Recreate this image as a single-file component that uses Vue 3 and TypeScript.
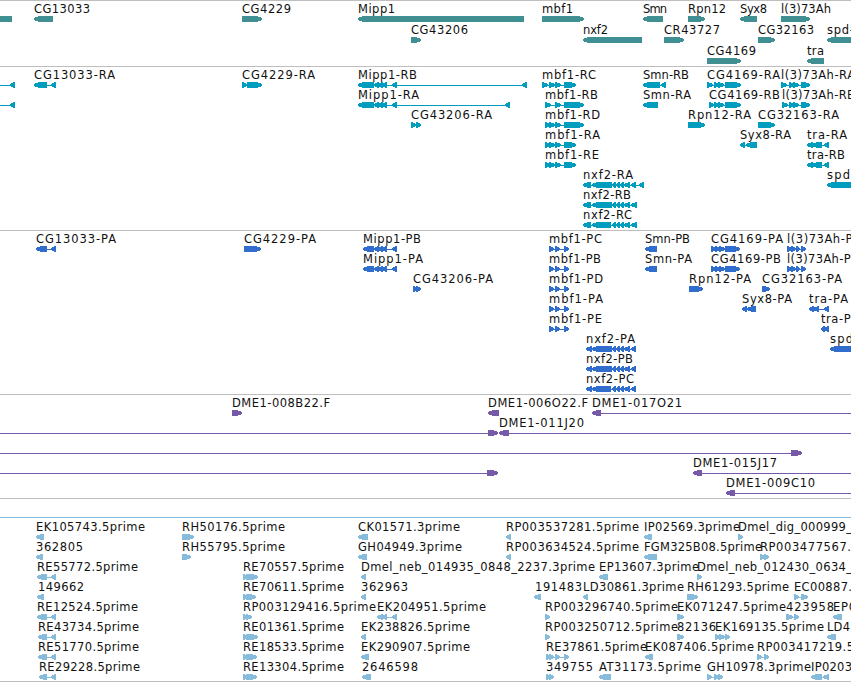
<script lang="ts" setup>
type Direction = "L" | "R" | "";

// row, label, label start, label end, direction, exons ("start-end", space separated)
type Feature = [number, string, number, number, Direction, string];

interface Track {
  name: string;
  height: number;
  top: number;
  pitch: number;
  features: Feature[];
}

const WIDTH = 851;
const HEAD = 5;

const tracks: Track[] = [
  {
    name: "gene",
    height: 65,
    top: 15,
    pitch: 21,
    features: [
      [0, "", 0, 0, "", "0-12"],
      [0, "CG13033", 34, 90, "L", "34-53"],
      [0, "CG4229", 242, 291, "R", "242-262"],
      [0, "Mipp1", 358, 395, "L", "358-524"],
      [0, "mbf1", 542, 573, "R", "542-584"],
      [0, "Smn", 643, 667, "L", "643-663"],
      [0, "Rpn12", 688, 726, "R", "688-705"],
      [0, "Syx8", 740, 767, "L", "740-757"],
      [0, "l(3)73Ah", 781, 831, "R", "781-810"],
      [1, "CG43206", 411, 468, "R", "411-421"],
      [1, "nxf2", 583, 608, "L", "583-642"],
      [1, "CR43727", 664, 720, "R", "664-684"],
      [1, "CG32163", 758, 814, "R", "758-775"],
      [1, "spd-2", 827, 862, "L", "827-880"],
      [2, "CG4169", 707, 756, "R", "707-741"],
      [2, "tra", 807, 824, "L", "807-824"],
    ],
  },
  {
    name: "transcript",
    height: 163,
    top: 15,
    pitch: 20,
    features: [
      [0, "", 0, 0, "L", "-20--10 10-15"],
      [1, "", 0, 0, "L", "-20--10 10-15"],
      [0, "CG13033-RA", 34, 115, "L", "34-47 51-56"],
      [0, "CG4229-RA", 242, 315, "R", "242-247 247-262"],
      [0, "Mipp1-RB", 358, 417, "L", "358-374 374-379 378-383 382-387 392-397 522-527"],
      [1, "Mipp1-RA", 358, 419, "L", "358-374 374-379 378-383 382-387 392-397 505-510"],
      [2, "CG43206-RA", 411, 492, "R", "411-416 416-421"],
      [0, "mbf1-RC", 542, 596, "R", "542-548 549-555 555-561 564-576"],
      [1, "mbf1-RB", 545, 598, "R", "545-551 555-561 564-584"],
      [2, "mbf1-RD", 545, 600, "R", "545-550 549-555 555-561 564-584"],
      [3, "mbf1-RA", 545, 600, "R", "545-550 549-555 555-561 564-576"],
      [4, "mbf1-RE", 545, 599, "R", "545-550 549-555 555-561 564-576"],
      [5, "nxf2-RA", 583, 633, "L", "583-591 592-612 612-616 616-620 620-624 624-630 631-636 639-644"],
      [6, "nxf2-RB", 583, 631, "L", "583-591 592-612 612-616 616-620 620-624 624-630 631-637"],
      [7, "nxf2-RC", 583, 632, "L", "583-591 592-611 612-616 616-620 620-624 624-630 631-637"],
      [0, "Smn-RB", 643, 689, "L", "643-660 661-666"],
      [1, "Smn-RA", 643, 691, "L", "643-658"],
      [2, "Rpn12-RA", 688, 751, "R", "688-705"],
      [3, "Syx8-RA", 740, 791, "L", "740-745 746-757"],
      [0, "CG4169-RA", 707, 780, "R", "707-713 714-719 718-724 725-741"],
      [1, "CG4169-RB", 709, 780, "R", "709-714 714-719 718-724 725-741"],
      [0, "l(3)73Ah-RA", 781, 855, "R", "781-787 789-794 793-799 801-810"],
      [1, "l(3)73Ah-RB", 782, 855, "R", "782-788 789-794 793-799 801-810"],
      [2, "CG32163-RA", 758, 839, "R", "758-775"],
      [3, "tra-RA", 807, 847, "L", "807-813 812-822 824-829"],
      [4, "tra-RB", 807, 845, "L", "807-813 812-822 824-829"],
      [5, "spd-2-RA", 827, 887, "L", "827-880"],
    ],
  },
  {
    name: "protein",
    height: 163,
    top: 15,
    pitch: 20,
    features: [
      [0, "CG13033-PA", 36, 116, "L", "36-47 51-56"],
      [0, "CG4229-PA", 244, 316, "R", "244-247 246-261"],
      [0, "Mipp1-PB", 363, 421, "L", "363-374 374-379 378-383 382-387 392-397"],
      [1, "Mipp1-PA", 363, 423, "L", "363-374 374-379 378-383 382-387 392-397"],
      [2, "CG43206-PA", 413, 493, "R", "413-417 416-421"],
      [0, "mbf1-PC", 549, 602, "R", "549-554 555-560 564-569"],
      [1, "mbf1-PB", 549, 601, "R", "549-554 555-560 564-569"],
      [2, "mbf1-PD", 549, 603, "R", "549-554 555-560 564-569"],
      [3, "mbf1-PA", 549, 603, "R", "549-554 555-560 564-569"],
      [4, "mbf1-PE", 549, 602, "R", "549-554 555-560 564-569"],
      [5, "nxf2-PA", 586, 635, "L", "586-592 592-612 612-616 616-620 620-624 624-630 631-636"],
      [6, "nxf2-PB", 586, 633, "L", "586-592 592-612 612-616 616-620 620-624 624-630 631-636"],
      [7, "nxf2-PC", 586, 634, "L", "586-592 592-611 612-616 616-620 620-624 624-630 631-636"],
      [0, "Smn-PB", 645, 690, "L", "645-657"],
      [1, "Smn-PA", 645, 692, "L", "645-657"],
      [2, "Rpn12-PA", 689, 751, "R", "689-703"],
      [3, "Syx8-PA", 742, 792, "L", "742-747 747-756"],
      [0, "CG4169-PA", 711, 783, "R", "711-716 715-720 719-725 725-740"],
      [1, "CG4169-PB", 711, 781, "R", "711-716 715-720 719-725 725-740"],
      [0, "l(3)73Ah-PA", 787, 860, "R", "787-792 791-796 796-800 801-806"],
      [1, "l(3)73Ah-PB", 787, 859, "R", "787-792 791-796 796-800 801-806"],
      [2, "CG32163-PA", 762, 842, "R", "762-770"],
      [3, "tra-PA", 809, 848, "L", "809-814 813-819 824-829"],
      [4, "tra-PB", 821, 859, "L", "821-825 824-829"],
      [5, "spd-2-PA", 830, 889, "L", "830-880"],
    ],
  },
  {
    name: "clone",
    height: 103,
    top: 15,
    pitch: 20,
    features: [
      [0, "DME1-008B22.F", 232, 330, "R", "232-242"],
      [0, "DME1-006O22.F", 488, 588, "L", "488-499"],
      [0, "DME1-017O21", 592, 682, "L", "592-601 900-910"],
      [1, "", 0, 0, "R", "-20--10 488-498"],
      [1, "DME1-011J20", 499, 584, "L", "499-509 900-910"],
      [2, "", 0, 0, "R", "-20--10 791-802"],
      [3, "", 0, 0, "R", "-20--10 487-498"],
      [3, "DME1-015J17", 693, 777, "L", "693-702 900-910"],
      [4, "DME1-009C10", 726, 815, "L", "726-735 900-910"],
    ],
  },
  { name: "spacer", height: 18, top: 15, pitch: 20, features: [] },
  {
    name: "est",
    height: 163,
    top: 16,
    pitch: 20,
    features: [
      [0, "EK105743.5prime", 36, 145, "L", "36-44"],
      [0, "RH50176.5prime", 182, 285, "R", "182-194"],
      [0, "CK01571.3prime", 358, 460, "L", "358-368"],
      [0, "RP003537281.5prime", 506, 639, "L", "506-511"],
      [0, "IP02569.3prime", 644, 740, "L", "644-652"],
      [0, "Dmel_dig_000999_", 738, 852, "R", "738-743"],
      [1, "362805", 36, 83, "L", "36-43"],
      [1, "RH55795.5prime", 182, 285, "R", "182-191"],
      [1, "GH04949.3prime", 358, 462, "L", "358-367"],
      [1, "RP003634524.5prime", 506, 639, "L", "506-511"],
      [1, "FGM325B08.5prime", 644, 762, "L", "644-657"],
      [1, "RP003477567.", 760, 851, "R", "760-765 764-769"],
      [2, "RE55772.5prime", 37, 138, "L", "37-47 51-56"],
      [2, "RE70557.5prime", 243, 344, "R", "243-247 246-258"],
      [2, "Dmel_neb_014935_0848_2237.3prime", 361, 595, "L", "361-366"],
      [2, "EP13607.3prime", 599, 699, "L", "599-608"],
      [2, "Dmel_neb_012430_0634_", 697, 852, "R", "697-702"],
      [3, "149662", 38, 84, "L", "37-44"],
      [3, "RE70611.5prime", 243, 344, "R", "243-247 246-256"],
      [3, "362963", 361, 408, "L", "361-366"],
      [3, "191483", 535, 582, "L", "534-541"],
      [3, "LD30861.3prime", 583, 684, "L", "583-588"],
      [3, "RH61293.5prime", 687, 789, "R", "687-698"],
      [3, "EC00887.", 794, 852, "R", "794-799 801-808"],
      [4, "RE12524.5prime", 37, 138, "L", "37-47 51-56"],
      [4, "RP003129416.5prime", 243, 376, "R", "243-247 246-252"],
      [4, "EK204951.5prime", 377, 486, "L", "377-383 382-387 392-397"],
      [4, "RP003296740.5prime", 545, 678, "R", "545-550"],
      [4, "EK071247.5prime", 677, 786, "R", "677-684"],
      [4, "423958", 786, 834, "R", "786-793 794-799"],
      [4, "EP0", 833, 856, "L", "833-842"],
      [5, "RE43734.5prime", 38, 139, "L", "38-47 51-56"],
      [5, "RE01361.5prime", 243, 344, "R", "243-247 246-258"],
      [5, "EK238826.5prime", 361, 470, "L", "361-366"],
      [5, "RP003250712.5prime", 545, 678, "R", "545-550"],
      [5, "82136", 677, 716, "R", "677-684"],
      [5, "EK169135.5prime", 715, 824, "R", "715-720 719-725 725-730"],
      [5, "LD4", 827, 850, "L", "827-836"],
      [6, "RE51770.5prime", 38, 139, "L", "38-47 51-56"],
      [6, "RE18533.5prime", 243, 344, "R", "243-247 246-257"],
      [6, "EK290907.5prime", 361, 470, "L", "361-369"],
      [6, "RE37861.5prime", 546, 647, "R", "546-550 549-554 555-560 564-569"],
      [6, "EK087406.5prime", 645, 754, "L", "645-653"],
      [6, "RP003417219.5", 757, 854, "R", "757-762 764-769"],
      [7, "RE29228.5prime", 39, 140, "L", "39-47 51-56"],
      [7, "RE13304.5prime", 243, 344, "R", "243-247 246-257"],
      [7, "2646598", 362, 418, "L", "362-371"],
      [7, "349755", 546, 593, "R", "546-550 549-554"],
      [7, "AT31173.5prime", 599, 701, "L", "599-611"],
      [7, "GH10978.3prime", 707, 811, "R", "707-712 714-719 718-723"],
      [7, "IP0203", 811, 852, "L", "811-822 823-829"],
    ],
  },
];

function parseExons(spec: string): number[][] {
  return spec.split(" ").map((part) => {
    const match = part.match(/^(-?\d+)-(-?\d+)$/);
    return match ? [Number(match[1]), Number(match[2])] : [0, 0];
  });
}

// exon bar, 6px high, tapering at the end the strand points to
function exonPath([a, b]: number[], dir: Direction, y: number) {
  const head = Math.min(HEAD, b - a - 1);
  if (dir === "L") {
    return `M${a} ${y + 2}L${a + head} ${y}H${b}V${y + 6}H${a + head}L${a} ${y + 4}Z`;
  }
  if (dir === "R") {
    return `M${a} ${y}H${b - head}L${b} ${y + 2}V${y + 4}L${b - head} ${y + 6}H${a}Z`;
  }
  return `M${a} ${y}H${b}V${y + 6}H${a}Z`;
}

function featurePath(feature: Feature, y: number) {
  const exons = parseExons(feature[5]);
  const start = exons[0][0];
  const end = exons[exons.length - 1][1];
  const intron = exons.length > 1 ? `M${start + 1} ${y + 3}H${end - 1}v1H${start + 1}Z` : "";
  return intron + exons.map((exon) => exonPath(exon, feature[4], y)).join("");
}

const rendered = tracks.map((track) => ({
  ...track,
  glyphs: track.features.map((feature) => {
    const y = track.top + feature[0] * track.pitch;
    return {
      label: feature[1],
      x: feature[2],
      y: y - 3,
      length: feature[3] - feature[2],
      path: featurePath(feature, y),
    };
  }),
}));
</script>

<template>
  <main class="browser">
    <section v-for="track in rendered" :key="track.name" class="track" :class="track.name">
      <svg :width="WIDTH" :height="track.height" :viewBox="`0 0 ${WIDTH} ${track.height}`">
        <g v-for="(glyph, i) in track.glyphs" :key="i">
          <path class="glyph" :d="glyph.path" />
          <text v-if="glyph.label" :x="glyph.x" :y="glyph.y" :textLength="glyph.length">{{ glyph.label }}</text>
        </g>
      </svg>
    </section>
  </main>
</template>

<style>
body {
  margin: 0;
  background: #fff;
}
</style>

<style scoped>
.browser {
  width: 851px;
  overflow: hidden;
  border-bottom: 1px solid #bebebe;
}

.track {
  border-top: 1px solid #bebebe;
}

.track svg {
  display: block;
}

.track text {
  font-family: "DejaVu Sans", sans-serif;
  font-size: 11.5px;
  fill: #111;
}

.glyph {
  shape-rendering: crispEdges;
}

.gene .glyph {
  fill: #408f93;
}

.transcript .glyph {
  fill: #009dbf;
}

.protein .glyph {
  fill: #306dcd;
}

.clone .glyph {
  fill: #7659a9;
}

.track.est {
  border-top-color: #86bbdc;
}

.est .glyph {
  fill: #86bbdc;
}
</style>
